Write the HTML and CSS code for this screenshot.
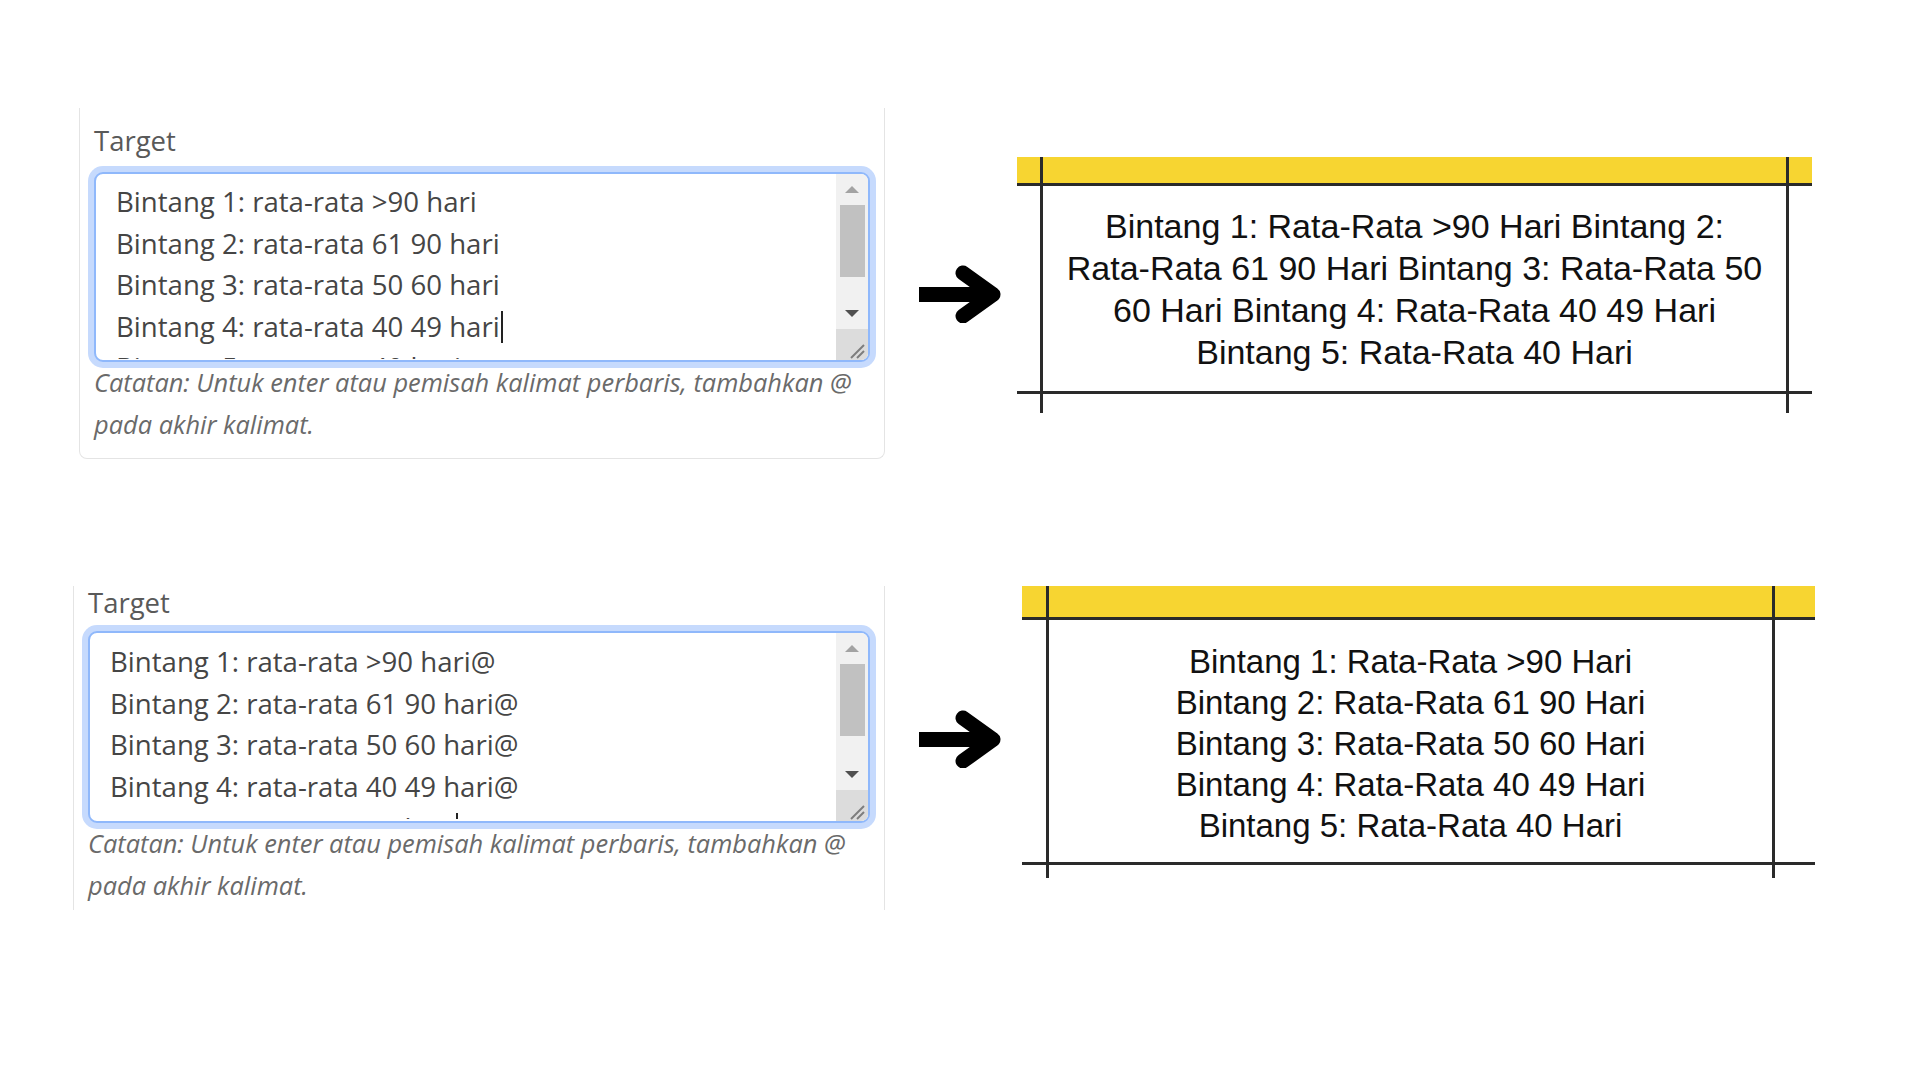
FILE: index.html
```html
<!DOCTYPE html>
<html>
    <head>
        <meta charset="utf-8">
        <title>Target</title>
        <link rel="stylesheet" href="styles.css">
    </head>
    <body>
        <div class="page">

            <!-- before: one long line -->
            <div class="row">
                <div class="panel panel-first">
                    <div class="label">Target</div>
                    <div class="textarea">
                        <div class="ta-text">
                            <div class="ta-lines">
                                <div>Bintang 1: rata-rata &gt;90 hari</div>
                                <div>Bintang 2: rata-rata 61 90 hari</div>
                                <div>Bintang 3: rata-rata 50 60 hari</div>
                                <div>Bintang 4: rata-rata 40 49 hari<span class="caret"></span></div>
                                <div>Bintang 5: rata-rata 40 hari</div>
                            </div>
                        </div>
                        <div class="scrollbar">
                            <div class="sb-btn"><span class="tri-up"></span></div>
                            <div class="sb-track"><div class="sb-thumb"></div></div>
                            <div class="sb-btn sb-btn-down"><span class="tri-down"></span></div>
                            <div class="sb-corner">
                                <svg width="31" height="31" viewBox="0 0 31 31">
                                    <line x1="15" y1="29" x2="28" y2="16" stroke="#7d7d7d" stroke-width="2"/>
                                    <line x1="21" y1="29" x2="28" y2="22" stroke="#7d7d7d" stroke-width="2"/>
                                </svg>
                            </div>
                        </div>
                    </div>
                    <p class="note">Catatan: Untuk enter atau pemisah kalimat perbaris, tambahkan @ pada akhir kalimat.</p>
                </div>

                <div class="arrow arrow-first">
                    <svg width="82" height="58" viewBox="0 0 82 58">
                        <rect x="0" y="22" width="70" height="15" fill="#000"/>
                        <polyline points="44,8 74,29.5 44,51" fill="none" stroke="#000" stroke-width="15" stroke-linecap="round" stroke-linejoin="round"/>
                    </svg>
                </div>

                <div class="sheet sheet-first">
                    <div class="cell yellow"></div>
                    <div class="cell yellow"></div>
                    <div class="cell yellow"></div>
                    <div class="cell"></div>
                    <div class="cell cell-text">Bintang 1: Rata-Rata &gt;90 Hari Bintang 2: Rata-Rata 61 90 Hari Bintang 3: Rata-Rata 50 60 Hari Bintang 4: Rata-Rata 40 49 Hari Bintang 5: Rata-Rata 40 Hari</div>
                    <div class="cell"></div>
                    <div class="cell"></div>
                    <div class="cell"></div>
                    <div class="cell"></div>
                </div>
            </div>

            <!-- after: @ splits the lines -->
            <div class="row row-second">
                <div class="panel panel-second">
                    <div class="label">Target</div>
                    <div class="textarea">
                        <div class="ta-text">
                            <div class="ta-lines">
                                <div>Bintang 1: rata-rata &gt;90 hari@</div>
                                <div>Bintang 2: rata-rata 61 90 hari@</div>
                                <div>Bintang 3: rata-rata 50 60 hari@</div>
                                <div>Bintang 4: rata-rata 40 49 hari@</div>
                                <div>Bintang 5: rata-rata 40 hari<span class="caret"></span></div>
                            </div>
                        </div>
                        <div class="scrollbar">
                            <div class="sb-btn"><span class="tri-up"></span></div>
                            <div class="sb-track"><div class="sb-thumb"></div></div>
                            <div class="sb-btn sb-btn-down"><span class="tri-down"></span></div>
                            <div class="sb-corner">
                                <svg width="31" height="31" viewBox="0 0 31 31">
                                    <line x1="15" y1="29" x2="28" y2="16" stroke="#7d7d7d" stroke-width="2"/>
                                    <line x1="21" y1="29" x2="28" y2="22" stroke="#7d7d7d" stroke-width="2"/>
                                </svg>
                            </div>
                        </div>
                    </div>
                    <p class="note">Catatan: Untuk enter atau pemisah kalimat perbaris, tambahkan @ pada akhir kalimat.</p>
                </div>

                <div class="arrow arrow-second">
                    <svg width="82" height="58" viewBox="0 0 82 58">
                        <rect x="0" y="22" width="70" height="15" fill="#000"/>
                        <polyline points="44,8 74,29.5 44,51" fill="none" stroke="#000" stroke-width="15" stroke-linecap="round" stroke-linejoin="round"/>
                    </svg>
                </div>

                <div class="sheet sheet-second">
                    <div class="cell yellow"></div>
                    <div class="cell yellow"></div>
                    <div class="cell yellow"></div>
                    <div class="cell"></div>
                    <div class="cell cell-text">Bintang 1: Rata-Rata &gt;90 Hari<br>Bintang 2: Rata-Rata 61 90 Hari<br>Bintang 3: Rata-Rata 50 60 Hari<br>Bintang 4: Rata-Rata 40 49 Hari<br>Bintang 5: Rata-Rata 40 Hari</div>
                    <div class="cell"></div>
                    <div class="cell"></div>
                    <div class="cell"></div>
                    <div class="cell"></div>
                </div>
            </div>

        </div>
    </body>
</html>
```

FILE: styles.css
```css
body {
    margin: 0;
    background-color: #ffffff;
}

.page {
    padding-top: 108px;
}

.row {
    display: flex;
    align-items: flex-start;
}

.row-second {
    margin-top: 127px;
}

    /* form panel */

.panel {
    box-sizing: border-box;
    border-left: 1px solid #e4e4e4;
    border-right: 1px solid #e4e4e4;
    padding: 14px 14px 13px 14px;
    font-family: "Open Sans", "Noto Sans", sans-serif;
}

.panel-first {
    width: 806px;
    margin-left: 79px;
    border-bottom: 1px solid #e4e4e4;
    border-radius: 0 0 8px 8px;
}

.panel-second {
    width: 812px;
    margin-left: 73px;
    padding-top: 0;
    padding-bottom: 4px;
}

.label {
    font-size: 27.5px;
    line-height: 38px;
    color: #595959;
    margin-bottom: 12px;
}

.panel-second .label {
    margin-top: -2px;
    margin-bottom: 9px;
}

.textarea {
    display: flex;
    height: 190px;
    box-sizing: border-box;
    border: 2px solid #8fb8fb;
    border-radius: 9px;
    box-shadow: 0 0 0 6px #c6dafd;
    background-color: #ffffff;
    overflow: hidden;
}

.panel-second .textarea {
    height: 192px;
}

.ta-text {
    flex: 1;
    display: flex;
    flex-direction: column;
    padding: 7px 19px 1px 20px;
    font-size: 27.6px;
    line-height: 41.6px;
    color: #454545;
    white-space: nowrap;
}

.panel-second .ta-text {
    padding-top: 8px;
    padding-bottom: 2px;
}

.ta-lines {
    flex: 1;
    overflow: hidden;
}

.caret {
    display: inline-block;
    width: 2px;
    height: 32px;
    background-color: #222;
    vertical-align: -6px;
    margin-left: 1px;
}

    /* fake scrollbar */

.scrollbar {
    width: 32px;
    display: flex;
    flex-direction: column;
    background-color: #f1f1f1;
}

.sb-btn {
    height: 30px;
    display: flex;
    align-items: center;
    justify-content: center;
}

.sb-btn-down {
    height: 32px;
}

.tri-up {
    width: 0;
    height: 0;
    border-left: 7px solid transparent;
    border-right: 7px solid transparent;
    border-bottom: 7px solid #a3a3a3;
}

.tri-down {
    width: 0;
    height: 0;
    border-left: 7px solid transparent;
    border-right: 7px solid transparent;
    border-top: 7px solid #505050;
}

.sb-track {
    flex: 1;
    padding: 1px 3px 0 4px;
}

.sb-thumb {
    height: 72px;
    background-color: #c1c1c1;
}

.sb-corner {
    height: 31px;
    background-color: #dcdcdc;
}

.sb-corner svg {
    display: block;
}

.note {
    margin: 0;
    font-size: 25.4px;
    line-height: 41.6px;
    font-style: italic;
    color: #6a6a6a;
}

    /* arrows */

.arrow svg {
    display: block;
}

.arrow-first {
    margin-left: 34px;
    margin-top: 157px;
}

.arrow-second {
    margin-left: 34px;
    margin-top: 124px;
}

    /* spreadsheet crops */

.sheet {
    display: grid;
    gap: 3px;
    background-color: #2a2a2a;
}

.sheet-first {
    margin-left: 16px;
    margin-top: 49px;
    grid-template-columns: 23px 743px 23px;
    grid-template-rows: 26px 205px 19px;
}

.sheet-second {
    margin-left: 21px;
    grid-template-columns: 24px 723px 40px;
    grid-template-rows: 31px 242px 13px;
}

.cell {
    background-color: #ffffff;
}

.cell.yellow {
    background-color: #f7d531;
}

.cell-text {
    display: flex;
    align-items: center;
    justify-content: center;
    text-align: center;
    font-family: "Liberation Sans", Arial, sans-serif;
    color: #111111;
}

.sheet-first .cell-text {
    padding: 0 16px;
    font-size: 34px;
    line-height: 42px;
}

.sheet-second .cell-text {
    padding-top: 5px;
    font-size: 33px;
    line-height: 41px;
}
```
